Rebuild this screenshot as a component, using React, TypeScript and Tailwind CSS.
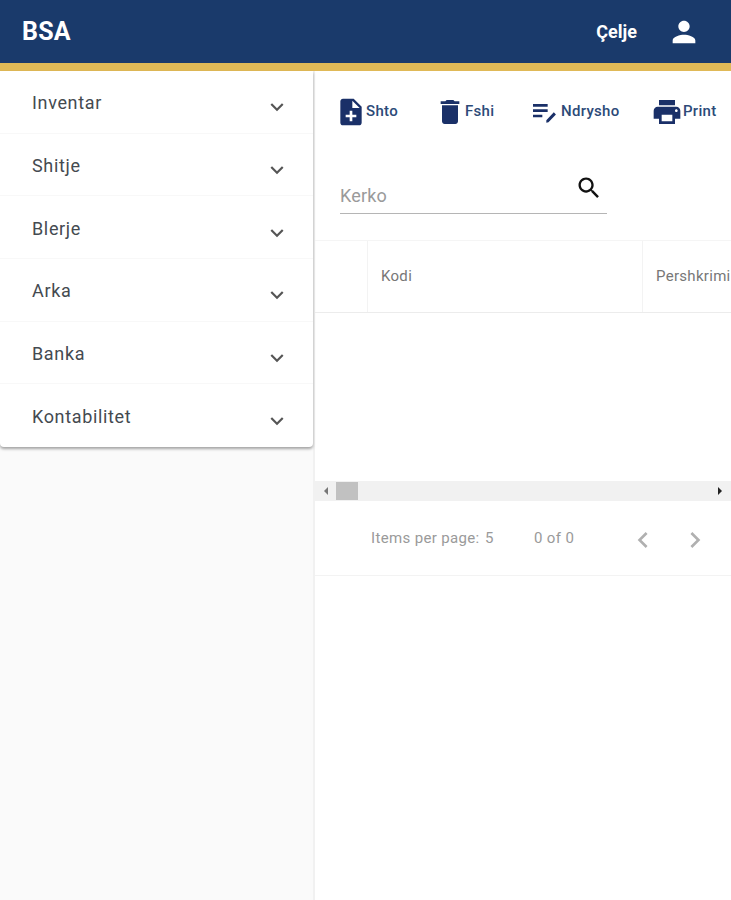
const ICONS = {
  noteAdd: "M14 2H6c-1.1 0-1.99.9-1.99 2L4 20c0 1.1.89 2 1.99 2H18c1.1 0 2-.9 2-2V8l-6-6zm2 14h-3v3h-2v-3H8v-2h3v-3h2v3h3v2zm-3-7V3.5L18.5 9H13z",
  trash: "M6 19c0 1.1.9 2 2 2h8c1.1 0 2-.9 2-2V7H6v12zM19 4h-3.5l-1-1h-5l-1 1H5v2h14V4z",
  editNote: "M3 10h11v2H3zM3 6h11v2H3zM3 14h7v2H3zM18.6 12.2l1.6 1.6-5.6 5.9-1.6.3v-1.9z",
  print: "M19 8H5c-1.66 0-3 1.34-3 3v6h4v4h12v-4h4v-6c0-1.66-1.34-3-3-3zm-3 11H8v-5h8v5zm3-7c-.55 0-1-.45-1-1s.45-1 1-1 1 .45 1 1-.45 1-1 1zm-1-9H6v4h12V3z",
  search: "M15.5 14h-.79l-.28-.27C15.41 12.59 16 11.11 16 9.5 16 5.91 13.09 3 9.5 3S3 5.91 3 9.5 5.91 16 9.5 16c1.61 0 3.09-.59 4.23-1.57l.27.28v.79l5 4.99L20.49 19l-4.99-5zm-6 0C7.01 14 5 11.99 5 9.5S7.01 5 9.5 5 14 7.01 14 9.5 11.99 14 9.5 14z",
  person: "M12 12c2.21 0 4-1.79 4-4s-1.79-4-4-4-4 1.79-4 4 1.79 4 4 4zm0 2c-2.67 0-8 1.34-8 4v2h16v-2c0-2.66-5.33-4-8-4z",
  expand: "M16.59 8.59L12 13.17 7.41 8.59 6 10l6 6 6-6z",
  left: "M15.41 7.41L14 6l-6 6 6 6 1.41-1.41L10.83 12z",
  right: "M10 6L8.59 7.41 13.17 12l-4.58 4.59L10 18l6-6z",
};

function Icon({ d, className }: { d: string; className: string }) {
  return (
    <svg viewBox="0 0 24 24" fill="currentColor" className={className}>
      <path d={d} />
    </svg>
  );
}

const menu = ["Inventar", "Shitje", "Blerje", "Arka", "Banka", "Kontabilitet"];

function Header() {
  return (
    <header className="h-[71px] shrink-0 bg-[#1a3a6b] border-b-[8px] border-[#e0b957] flex items-center pl-[22px] text-white">
      <div className="flex-1 text-[25px] leading-none font-bold tracking-[0.2px] mt-[-1px]">BSA</div>
      <div className="text-[18px] font-bold mr-[30px]">Çelje</div>
      <Icon d={ICONS.person} className="w-[34px] h-[34px] mr-[30px]" />
    </header>
  );
}

function Sidebar() {
  return (
    <aside className="w-[315px] shrink-0 bg-[#fafafa] border-r-[2px] border-[#f1f1f1]">
      <div className="w-[313px] bg-white rounded-b-[4px] shadow-[0_2px_3px_rgba(0,0,0,0.35)] divide-y divide-[#f8f8f8]">
        {menu.map((item) => (
          <div key={item} className="h-[62.67px] flex items-center pl-[32px] pr-[23px] text-[18px] text-[#444a50] tracking-[0.65px]">
            <span className="flex-1 mt-[2px]">{item}</span>
            <Icon d={ICONS.expand} className="w-[26px] h-[26px] text-[#555] mt-[11px]" />
          </div>
        ))}
      </div>
    </aside>
  );
}

function ToolButton({ icon, label, labelClass }: { icon: string; label: string; labelClass: string }) {
  return (
    <div className="flex items-center">
      <Icon d={icon} className="w-[32px] h-[32px] shrink-0 text-[#1a3068]" />
      <span className={`text-[15px] font-medium tracking-[0.3px] whitespace-nowrap text-[#2c4a78] ${labelClass}`}>{label}</span>
    </div>
  );
}

function Toolbar() {
  return (
    <div className="h-[80px] flex items-center pl-[20px] pt-[1px]">
      <ToolButton icon={ICONS.noteAdd} label="Shto" labelClass="ml-[-1px] w-[68px]" />
      <ToolButton icon={ICONS.trash} label="Fshi" labelClass="ml-[-1px] w-[64px]" />
      <ToolButton icon={ICONS.editNote} label="Ndrysho" labelClass="ml-[0px] w-[90px]" />
      <ToolButton icon={ICONS.print} label="Print" labelClass="ml-[0px]" />
    </div>
  );
}

function SearchField() {
  return (
    <div className="ml-[25px] w-[267px] h-[63px] border-b border-[#b5b5b5] flex items-end justify-between">
      <span className="text-[18px] tracking-[0.15px] text-[#9a9a9a] mb-[4px]">Kerko</span>
      <Icon d={ICONS.search} className="w-[28px] h-[28px] text-[#111] mb-[11px] mr-[4px]" />
    </div>
  );
}

function TableHead() {
  return (
    <div className="mt-[26px] border-y border-t-[#f5f5f5] border-b-[#ececec] h-[73px] flex text-[15px] tracking-[0.3px] text-[#777] whitespace-nowrap">
      <div className="w-[53px] shrink-0 border-r border-[#f3f3f3]" />
      <div className="w-[275px] shrink-0 border-r border-[#f3f3f3] pl-[13px] flex items-center">Kodi</div>
      <div className="pl-[13px] flex items-center">Pershkrimi</div>
    </div>
  );
}

function ScrollBar() {
  return (
    <div className="mt-[168px] h-[20px] bg-[#f1f1f1] flex items-center">
      <div className="w-[21px] flex justify-center">
        <div className="w-0 h-0 border-y-[4px] border-y-transparent border-r-[4px] border-r-[#777]" />
      </div>
      <div className="w-[22px] h-[18px] bg-[#c1c1c1]" />
      <div className="flex-1" />
      <div className="w-[5px] mr-[8px]">
        <div className="w-0 h-0 border-y-[4px] border-y-transparent border-l-[4px] border-l-[#222]" />
      </div>
    </div>
  );
}

function Paginator() {
  return (
    <div className="h-[75px] border-b border-[#f3f3f3] flex items-center text-[15px] tracking-[0.35px] text-[#9a9a9a] pl-[56px]">
      <span className="w-[114px] whitespace-nowrap">Items per page:</span>
      <span className="w-[49px]">5</span>
      <span className="w-[93px]">0 of 0</span>
      <Icon d={ICONS.left} className="w-[32px] h-[32px] text-[#b0b0b0] mt-[3px]" />
      <Icon d={ICONS.right} className="w-[32px] h-[32px] text-[#b0b0b0] mt-[3px] ml-[20px]" />
    </div>
  );
}

export default function App() {
  return (
    <div className="h-screen overflow-hidden flex flex-col bg-white font-['Roboto',sans-serif]">
      <Header />
      <div className="flex flex-1 min-h-0">
        <Sidebar />
        <main className="flex-1 min-w-0 overflow-hidden">
          <Toolbar />
          <SearchField />
          <TableHead />
          <ScrollBar />
          <Paginator />
        </main>
      </div>
    </div>
  );
}
